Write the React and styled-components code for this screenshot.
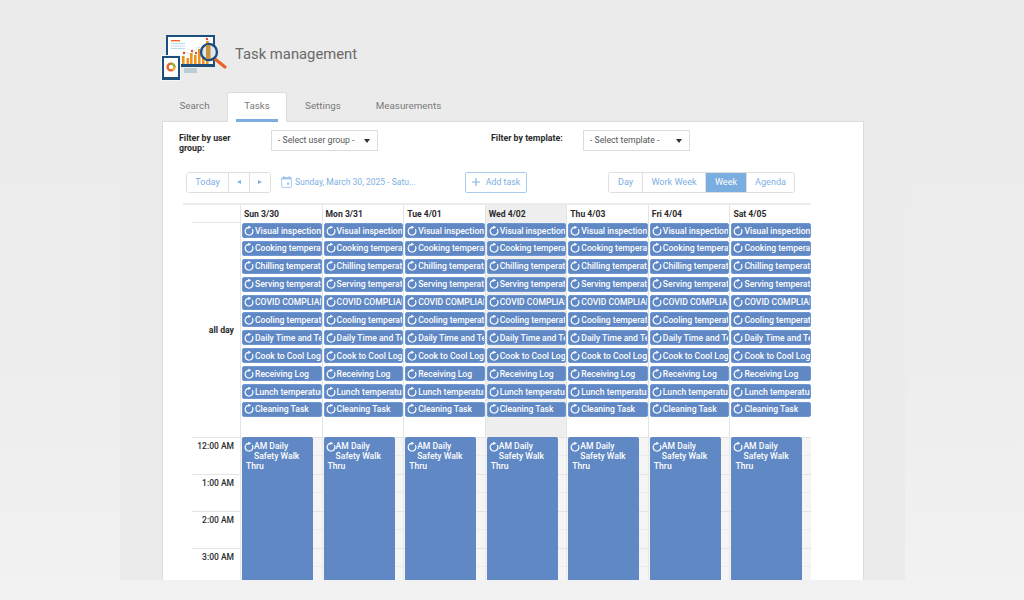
import styled, { createGlobalStyle } from "styled-components";

const DAYS = [
  { label: "Sun 3/30" },
  { label: "Mon 3/31" },
  { label: "Tue 4/01" },
  { label: "Wed 4/02", today: true },
  { label: "Thu 4/03" },
  { label: "Fri 4/04" },
  { label: "Sat 4/05" },
];

const TASKS = [
  "Visual inspection",
  "Cooking temperature",
  "Chilling temperature",
  "Serving temperature",
  "COVID COMPLIANCE",
  "Cooling temperature",
  "Daily Time and Temperature",
  "Cook to Cool Log",
  "Receiving Log",
  "Lunch temperature",
  "Cleaning Task",
];

const HOURS = ["12:00 AM", "1:00 AM", "2:00 AM", "3:00 AM", "4:00 AM"];

const GlobalStyle = createGlobalStyle`
  html, body {
    margin: 0;
    padding: 0;
    overflow: hidden;
  }
  body {
    font-family: Roboto, "Liberation Sans", sans-serif;
  }
`;

function RepeatIcon() {
  return (
    <IconSvg viewBox="0 0 10 10">
      <path d="M8.3 3 A3.9 3.9 0 1 1 4.6 1.3" fill="none" stroke="#fff" strokeWidth="1.2" />
      <path d="M4.2 -0.3 L7.4 1.3 L4.2 2.9 Z" fill="#fff" />
    </IconSvg>
  );
}

function Logo() {
  return (
    <svg width="70" height="50" viewBox="0 0 70 50">
      <rect x="6" y="3" width="49" height="32" fill="#1d4f7c" />
      <rect x="8" y="5" width="45" height="27" fill="#fff" />
      <rect x="24" y="36" width="13" height="5" fill="#b9ced3" />
      <rect x="11" y="8" width="9" height="1.4" fill="#ee6a2c" />
      <rect x="11" y="11" width="14" height="1" fill="#b9dfee" />
      <rect x="11" y="13.5" width="14" height="1" fill="#b9dfee" />
      <rect x="11" y="16" width="14" height="1" fill="#b9dfee" />
      <path d="M17 31 L26 20 L31 23 L38 15 L44 18 L50 8" fill="none" stroke="#bfe0ec" strokeWidth="0.8" />
      <rect x="22" y="24" width="2.6" height="8" fill="#f0901e" />
      <rect x="26.5" y="26" width="2.6" height="6" fill="#f0901e" />
      <rect x="30" y="21" width="2.6" height="11" fill="#f0901e" />
      <rect x="34" y="23" width="2.6" height="9" fill="#f0901e" />
      <rect x="38" y="17" width="2.6" height="15" fill="#f0901e" />
      <rect x="42" y="19" width="2.6" height="13" fill="#f0901e" />
      <rect x="46" y="9" width="2.6" height="23" fill="#f0901e" />
      <circle cx="24" cy="21" r="1.2" fill="#e2492c" />
      <circle cx="32" cy="19" r="1.2" fill="#e2492c" />
      <circle cx="36" cy="21" r="1.2" fill="#e2492c" />
      <circle cx="47" cy="7" r="1.2" fill="#e2492c" />
      <path d="M55 27 L65 35" stroke="#e8622a" strokeWidth="3.2" strokeLinecap="round" />
      <circle cx="49" cy="20" r="8" fill="#dfe9ec" stroke="#1d4f7c" strokeWidth="2.4" />
      <rect x="46" y="13" width="4.5" height="14" fill="#c9923f" />
      <rect x="1" y="23" width="20" height="26" fill="#f6f6f6" />
      <rect x="2" y="24" width="18" height="24" fill="#1d4f7c" />
      <rect x="4" y="26" width="14" height="19" fill="#fff" />
      <circle cx="11" cy="35" r="3.4" fill="none" stroke="#e8622a" strokeWidth="2.4" />
      <path d="M11 31.6 A3.4 3.4 0 0 1 14.4 35" fill="none" stroke="#8cbb3c" strokeWidth="2.4" />
      <path d="M14.4 35 A3.4 3.4 0 0 1 12.5 38" fill="none" stroke="#f0c23a" strokeWidth="2.4" />
    </svg>
  );
}

export default function App() {
  return (
    <>
      <GlobalStyle />
      <Stage>
        <Screen>
          <Header>
            <Logo />
            <Title>Task management</Title>
          </Header>
          <Tabs>
            <Tab $width={65}>Search</Tab>
            <Tab $active $width={60}>Tasks</Tab>
            <Tab $width={72}>Settings</Tab>
            <Tab $width={99}>Measurements</Tab>
          </Tabs>
          <Panel>
            <Filters>
              <FilterLabel>Filter by user group:</FilterLabel>
              <Select>
                - Select user group -
                <Caret />
              </Select>
              <FilterLabel>Filter by template:</FilterLabel>
              <Select>
                - Select template -
                <Caret />
              </Select>
            </Filters>
            <Toolbar>
              <ButtonGroup>
                <GroupButton $width={41}>Today</GroupButton>
                <GroupButton $width={21}>
                  <Triangle $left />
                </GroupButton>
                <GroupButton $width={21}>
                  <Triangle />
                </GroupButton>
              </ButtonGroup>
              <DateRange>
                <svg width="11" height="12" viewBox="0 0 10 11">
                  <rect x="0.5" y="1.5" width="9" height="9" rx="1" fill="none" stroke="#9cc3ea" strokeWidth="0.8" />
                  <rect x="0.5" y="1.5" width="9" height="1.6" fill="#9cc3ea" />
                  <rect x="2" y="0" width="1" height="2" fill="#9cc3ea" />
                  <rect x="7" y="0" width="1" height="2" fill="#9cc3ea" />
                  <rect x="5.5" y="6" width="2" height="2" fill="#9cc3ea" />
                </svg>
                Sunday, March 30, 2025 - Satu...
              </DateRange>
              <AddButton>
                <svg width="8" height="8" viewBox="0 0 8 8">
                  <path d="M4 0 V8 M0 4 H8" stroke="#7db0e3" strokeWidth="1.1" />
                </svg>
                Add task
              </AddButton>
              <ViewGroup>
                <GroupButton $width={33}>Day</GroupButton>
                <GroupButton $width={63}>Work Week</GroupButton>
                <GroupButton $width={41} $active>Week</GroupButton>
                <GroupButton $width={48}>Agenda</GroupButton>
              </ViewGroup>
            </Toolbar>
            <Calendar>
              <HeadRow>
                <GutterHead />
                {DAYS.map((d) => (
                  <DayHead key={d.label} $today={d.today}>{d.label}</DayHead>
                ))}
              </HeadRow>
              <AllDayRow>
                <AllDayLabel>all day</AllDayLabel>
                {DAYS.map((d) => (
                  <AllDayCell key={d.label} $today={d.today}>
                    {TASKS.map((t) => (
                      <AllDayEvent key={t}>
                        <RepeatIcon />
                        {t}
                      </AllDayEvent>
                    ))}
                  </AllDayCell>
                ))}
              </AllDayRow>
              <TimeRow>
                <Gutter>
                  {HOURS.map((h) => (
                    <HourLabel key={h}>{h}</HourLabel>
                  ))}
                </Gutter>
                {DAYS.map((d) => (
                  <DayColumn key={d.label}>
                    {HOURS.map((h) => (
                      <Slot key={h} />
                    ))}
                    <TimedEvent>
                      <FloatIcon>
                        <RepeatIcon />
                      </FloatIcon>
                      AM Daily Safety Walk Thru
                    </TimedEvent>
                  </DayColumn>
                ))}
              </TimeRow>
            </Calendar>
          </Panel>
        </Screen>
      </Stage>
    </>
  );
}

const Stage = styled.div`
  width: 1024px;
  height: 600px;
  background: linear-gradient(180deg, #ebebeb 0%, #ededed 60%, #f2f2f2 100%);
`;

const Screen = styled.div`
  width: 745px;
  height: 580px;
  margin-left: 120px;
  padding-left: 40px;
  background: #ebebeb;
  overflow: hidden;
`;

const Header = styled.div`
  display: flex;
  align-items: center;
  gap: 5px;
  height: 50px;
  padding-top: 32px;
`;

const Title = styled.h1`
  margin: 0 0 6px;
  font-size: 14.8px;
  font-weight: 400;
  color: #6a6a6a;
`;

const Tabs = styled.div`
  display: flex;
  height: 30px;
  margin: 10px 0 -1px 2px;
  position: relative;
  z-index: 1;
`;

const Tab = styled.div`
  position: relative;
  box-sizing: border-box;
  width: ${(p) => p.$width}px;
  padding-bottom: 4px;
  display: flex;
  align-items: center;
  justify-content: center;
  font-size: 9.8px;
  color: #7a7a7a;
  background: ${(p) => (p.$active ? "#fff" : "transparent")};
  border: ${(p) => (p.$active ? "1px solid #dcdcdc" : "none")};
  border-bottom: none;
  border-radius: 3px 3px 0 0;
  &::after {
    content: "";
    display: ${(p) => (p.$active ? "block" : "none")};
    position: absolute;
    left: 8px;
    right: 8px;
    bottom: 0;
    height: 3px;
    background: #7aaee0;
  }
`;

const Panel = styled.div`
  box-sizing: border-box;
  width: 702px;
  margin-left: 2px;
  padding: 8px 0 0 16px;
  height: 600px;
  background: #fff;
  border: 1px solid #dcdcdc;
`;

const Filters = styled.div`
  display: grid;
  grid-template-columns: 92px 220px 92px 107px;
  align-items: start;
  height: 21px;
`;

const FilterLabel = styled.div`
  width: 70px;
  padding-top: 3px;
  font-size: 8.8px;
  line-height: 10px;
  font-weight: 700;
  color: #2b2b2b;
  &:nth-child(3) {
    width: auto;
    white-space: nowrap;
  }
`;

const Select = styled.div`
  box-sizing: border-box;
  position: relative;
  width: 107px;
  height: 21px;
  padding: 0 0 1px 6px;
  display: flex;
  align-items: center;
  background: #fff;
  border: 1px solid #dcdcdc;
  font-size: 8.7px;
  color: #555;
`;

const Caret = styled.span`
  position: absolute;
  right: 7px;
  top: 8px;
  border-left: 3px solid transparent;
  border-right: 3px solid transparent;
  border-top: 4px solid #333;
`;

const Toolbar = styled.div`
  display: flex;
  align-items: center;
  height: 21px;
  margin: 21px 0 0 7px;
`;

const ButtonGroup = styled.div`
  display: flex;
  box-sizing: border-box;
  height: 21px;
  border: 1px solid #dfdfdf;
  border-radius: 3px;
  overflow: hidden;
`;

const ViewGroup = styled(ButtonGroup)`
  margin-left: 81px;
`;

const GroupButton = styled.div`
  box-sizing: border-box;
  width: ${(p) => p.$width}px;
  padding-bottom: 1px;
  display: flex;
  align-items: center;
  justify-content: center;
  font-size: 9.1px;
  color: ${(p) => (p.$active ? "#fff" : "#7db0e3")};
  background: ${(p) => (p.$active ? "#7aaee0" : "#fff")};
  & + & {
    border-left: 1px solid #dfdfdf;
  }
`;

const Triangle = styled.span`
  border-top: 2.5px solid transparent;
  border-bottom: 2.5px solid transparent;
  border-left: ${(p) => (p.$left ? "none" : "4px solid #7db0e3")};
  border-right: ${(p) => (p.$left ? "4px solid #7db0e3" : "none")};
`;

const DateRange = styled.div`
  display: flex;
  align-items: center;
  gap: 3px;
  width: 139px;
  margin-left: 10px;
  padding-bottom: 1px;
  font-size: 8.55px;
  color: #7db0e3;
  white-space: nowrap;
`;

const AddButton = styled.div`
  box-sizing: border-box;
  display: flex;
  align-items: center;
  justify-content: center;
  gap: 6px;
  width: 62px;
  height: 21px;
  margin-left: 45px;
  padding-bottom: 1px;
  border: 1px solid #a9cdee;
  border-radius: 2px;
  font-size: 8.8px;
  color: #7db0e3;
`;

const Calendar = styled.div`
  width: 628px;
  margin: 10px 0 0 4px;
  border-top: 2px solid #ebebeb;
`;

const gridColumns = "57px repeat(7, minmax(0, 1fr))";

const HeadRow = styled.div`
  display: grid;
  grid-template-columns: ${gridColumns};
  height: 18px;
`;

const GutterHead = styled.div`
  margin-left: 9px;
  border-bottom: 1px solid #e6e6e6;
`;

const DayHead = styled.div`
  box-sizing: border-box;
  padding-left: 3px;
  display: flex;
  align-items: center;
  font-size: 8.6px;
  font-weight: 700;
  color: #2b2b2b;
  background: ${(p) => (p.$today ? "#eeeeee" : "#fff")};
  border-left: 1px solid #e4e4e4;
`;

const AllDayRow = styled.div`
  display: grid;
  grid-template-columns: ${gridColumns};
  height: 214px;
`;

const AllDayLabel = styled.div`
  display: flex;
  align-items: center;
  justify-content: flex-end;
  padding-right: 6px;
  font-size: 8.7px;
  font-weight: 700;
  color: #2b2b2b;
`;

const AllDayCell = styled.div`
  box-sizing: border-box;
  display: flex;
  flex-direction: column;
  gap: 2.9px;
  padding-left: 1px;
  background: ${(p) => (p.$today ? "#eeeeee" : "#fff")};
  border-left: 1px solid #e4e4e4;
`;

const AllDayEvent = styled.div`
  box-sizing: border-box;
  display: flex;
  align-items: center;
  gap: 1px;
  height: 15px;
  padding-left: 1px;
  background: #5f88c4;
  border: 1px solid #6d98d4;
  border-radius: 2px;
  font-size: 8.6px;
  font-weight: 500;
  color: #fff;
  white-space: nowrap;
  overflow: hidden;
`;

const IconSvg = styled.svg`
  flex: none;
  width: 10px;
  height: 10px;
  overflow: visible;
`;

const TimeRow = styled.div`
  display: grid;
  grid-template-columns: ${gridColumns};
`;

const Gutter = styled.div`
  margin-left: 9px;
`;

const HourLabel = styled.div`
  box-sizing: border-box;
  height: 37px;
  padding: 2px 6px 0 0;
  text-align: right;
  font-size: 8.5px;
  line-height: 12px;
  font-weight: 500;
  color: #2b2b2b;
  border-top: 1px solid #e4e4e4;
`;

const DayColumn = styled.div`
  position: relative;
  border-left: 1px solid #e8e8e8;
`;

const Slot = styled.div`
  box-sizing: border-box;
  height: 37px;
  background: linear-gradient(180deg, #f5f5f5 0 17px, #ebebeb 17px 18px, #f5f5f5 18px);
  border-top: 1px solid #e4e4e4;
`;

const TimedEvent = styled.div`
  position: absolute;
  box-sizing: border-box;
  top: 0;
  left: 1px;
  width: 71px;
  height: 400px;
  padding: 4px 4px;
  background: #5f88c4;
  border-radius: 2px;
  font-size: 8.6px;
  font-weight: 500;
  line-height: 10px;
  color: #fff;
`;

const FloatIcon = styled.span`
  float: left;
  width: 10px;
  height: 14px;
  margin: 1px 0 0 -2px;
`;
